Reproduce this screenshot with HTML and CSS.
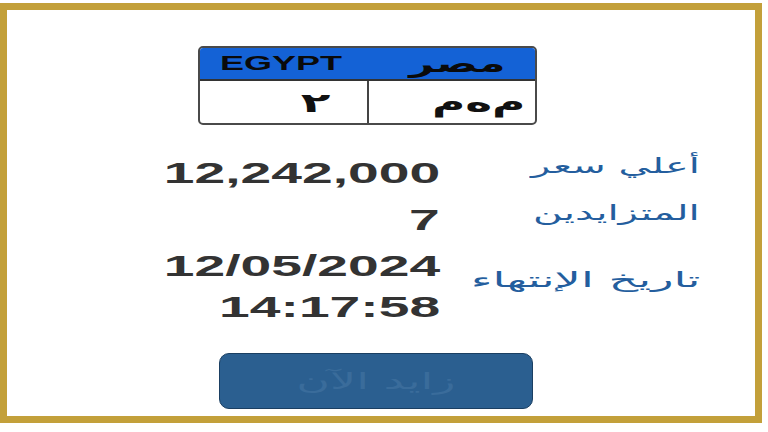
FILE: index.html
```html
<!DOCTYPE html>
<html lang="ar">
<head>
<meta charset="utf-8">
<link rel="stylesheet" href="styles.css">
</head>
<body>
<div class="frame">
  <div class="plate">
    <div class="plate-head">
      <span class="en"><span class="sx sx-left">EGYPT</span></span>
      <span class="ar"><span class="sx sx-right">مصر</span></span>
    </div>
    <div class="plate-body">
      <div class="cell cell-num"><span class="sx sx-right">٢</span></div>
      <div class="cell cell-let"><span class="sx sx-right">م‌ه‌م</span></div>
    </div>
  </div>

  <div class="rows">
    <div class="val"><span class="sx sx-right">12,242,000</span></div>
    <div class="lbl"><span class="sx sx-right l1">أعلي سعر</span></div>

    <div class="val"><span class="sx sx-right">7</span></div>
    <div class="lbl"><span class="sx sx-right l2">المتزايدين</span></div>

    <div class="val"><span class="sx sx-right">12/05/2024</span><br><span class="sx sx-right">14:17:58</span></div>
    <div class="lbl"><span class="sx sx-right l3">تاريخ الإنتهاء</span></div>
  </div>

  <button class="bid"><span class="sx sx-center">زايد الآن</span></button>
</div>
</body>
</html>
```

FILE: styles.css
```css
* { box-sizing: border-box; }
html, body { margin: 0; padding: 0; background: #ffffff; }
body { width: 768px; height: 432px; overflow: hidden; }

.frame {
  margin-top: 3px;
  width: 762px;
  height: 420px;
  border: 7px solid #c3a03a;
  background: #ffffff;
  display: flex;
  flex-direction: column;
  align-items: flex-start;
}

.sx { display: inline-block; transform: scaleX(1.8); white-space: nowrap; }
.sx-left { transform-origin: left center; }
.sx-right { transform-origin: right center; }
.sx-center { transform-origin: center center; }

.plate {
  margin-top: 36px;
  margin-left: 191px;
  width: 339px;
  height: 79px;
  border: 2px solid #4a4a4a;
  border-radius: 5px;
  overflow: hidden;
  display: flex;
  flex-direction: column;
}
.plate-head {
  height: 33px;
  background: #1462d6;
  border-bottom: 2px solid #333;
  display: flex;
  justify-content: space-between;
  align-items: center;
  font-family: "Liberation Sans", Arial, sans-serif;
  font-weight: bold;
  color: #0a0a0a;
}
.plate-head .en { padding-left: 20px; font-size: 20px; }
.plate-head .ar { padding-right: 30px; font-size: 24px; font-family: "DejaVu Sans", sans-serif; }
.plate-body { flex: 1; display: flex; }
.cell {
  display: flex;
  align-items: center;
  justify-content: flex-end;
  font-family: "DejaVu Sans", sans-serif;
  font-weight: bold;
  color: #111;
}
.cell-num { width: 169px; border-right: 2px solid #444; padding-right: 37px; font-size: 27px; }
.cell-let { flex: 1; padding-right: 10px; font-size: 26px; }
.cell-let .sx { transform: scaleX(1.75); }

.rows {
  margin-top: 26px;
  width: 748px;
  padding-right: 55px;
  display: grid;
  grid-template-columns: 1fr 230px;
  column-gap: 30px;
  row-gap: 5px;
  align-items: center;
}
.val {
  text-align: right;
  font-family: "Liberation Sans", Arial, sans-serif;
  font-weight: bold;
  font-size: 30px;
  line-height: 41px;
  color: #333333;
}
.val .sx { transform: scaleX(1.84); }
.lbl {
  text-align: right;
  font-family: "DejaVu Sans", sans-serif;
  font-size: 21px;
  line-height: 30px;
  color: #245e9e;
  padding-bottom: 12px;
}
.lbl .l1 { transform: scaleX(1.9); }
.lbl .l2 { transform: scaleX(1.92); }
.lbl .l3 { transform: scaleX(2.2); }

.bid {
  margin-top: 26px;
  margin-left: 212px;
  width: 314px;
  height: 56px;
  border: 1.5px solid #1b3f62;
  border-radius: 10px;
  background: #2b5f90;
  color: #3a6c9b;
  font-family: "DejaVu Sans", sans-serif;
  font-size: 23px;
  padding: 0;
}
.bid .sx { transform: scaleX(2); }
```
